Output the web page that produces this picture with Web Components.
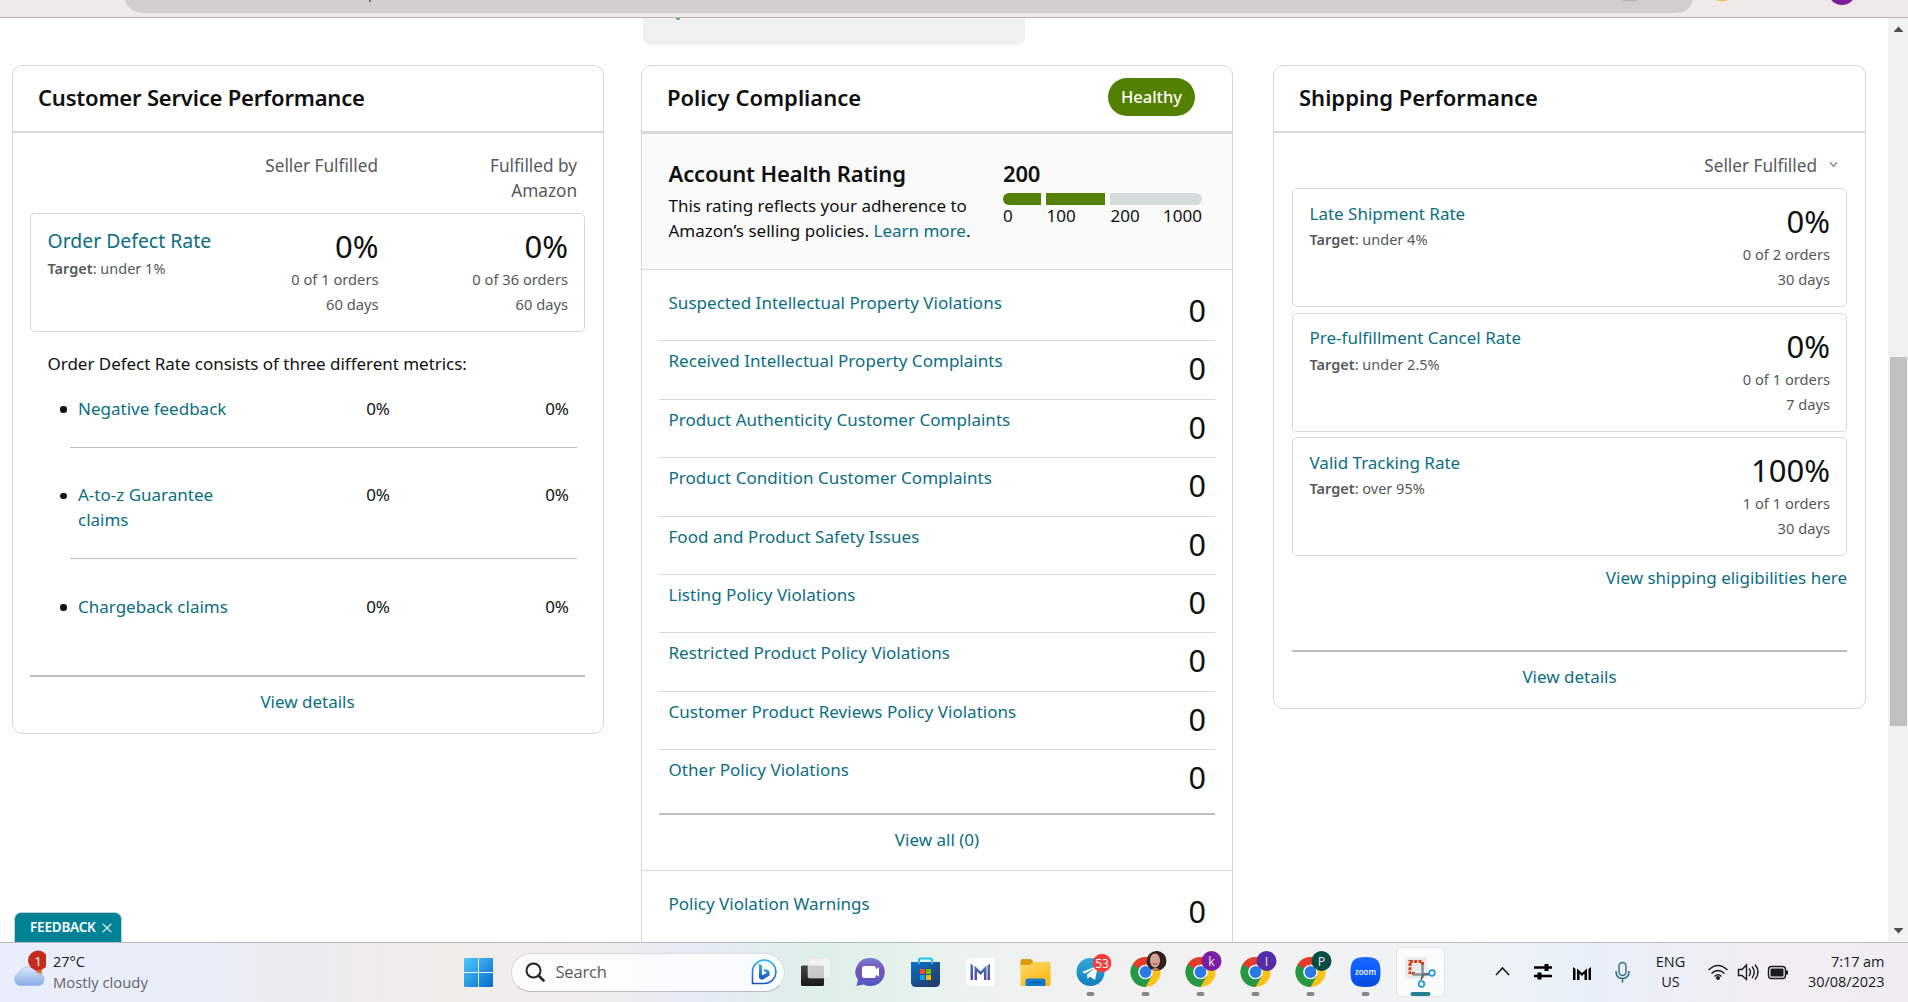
<!DOCTYPE html>
<html lang="en">
<head>
  <meta charset="utf-8">
  <title>Account Health</title>
  <style>
    html, body {
      margin: 0;
      height: 1002px;
      overflow: hidden;
      background: #fff;
    }

    body {
      font-family: "Noto Sans", "Open Sans", sans-serif;
      font-size: 17px;
      line-height: 25px;
      color: #0f1111;
      --link: #0b6e7f;
      --line: #d5d9d9;
      --line-dark: #b9bfbf;
      --muted: #565959;
    }
  </style>
</head>
<body>
  <health-app></health-app>

  <script>
    const define = (name, html, setup) => {
      const template = document.createElement('template')
      template.innerHTML = html.trim()

      customElements.define(name, class extends HTMLElement {
        constructor () {
          super()
          this.attachShadow({ mode: 'open' })
        }

        connectedCallback () {
          if (this.shadowRoot.firstChild) return
          this.shadowRoot.appendChild(template.content.cloneNode(true))
          if (setup) setup(this, this.shadowRoot)
        }
      })
    }

    // bottom edge of the browser toolbar
    define('browser-edge', /* html */`
      <style>
        :host { display: block; height: 17px; background: #efeae7; border-bottom: 1px solid #b9b5b1; overflow: hidden; }
        svg { display: block; }
      </style>
      <svg width="1908" height="17">
        <path d="M125 0 Q129 13 144 13 H1675 Q1690 13 1693 0 Z" fill="#d3cecb"/>
        <path d="M370 0v2" stroke="#4a7fb0" stroke-width="2"/>
        <path d="M1623 .5h14" stroke="#b5b1ae"/>
        <ellipse cx="1722" cy="-2" rx="7" ry="3.4" fill="#f0bd62"/>
        <circle cx="1842" cy="-9" r="14" fill="#7b1fa2"/>
      </svg>
    `)

    define('scroll-bar', /* html */`
      <style>
        :host { display: flex; flex-direction: column; align-items: center; width: 20px; height: 924px; background: #f1f1f1; }
        svg { display: block; flex: none; }
        .thumb { width: 17px; height: 369px; margin-top: 319px; margin-left: 1px; background: #c1c1c1; }
        .down { margin-top: auto; }
      </style>
      <svg width="20" height="20"><path d="M5.500 14h10l-5-5.500z" fill="#505050"/></svg>
      <div class="thumb"></div>
      <svg class="down" width="20" height="20"><path d="M5.500 6h10l-5 5.500z" fill="#505050"/></svg>
    `)

    define('health-card', /* html */`
      <style>
        :host { display: block; box-sizing: border-box; border: 1px solid var(--line); border-radius: 10px; background: #fff; }
        header { display: flex; align-items: center; justify-content: space-between; box-sizing: content-box; height: 62px; padding: 0 37px 3px 25px; border-bottom: var(--rule, 2px) solid var(--line); }
        h2 { margin: 1px 0 0; font-size: 22px; font-weight: 600; letter-spacing: var(--title-spacing, 0); }
      </style>
      <header><h2><slot name="title"></slot></h2><slot name="badge"></slot></header>
      <slot></slot>
    `)

    define('ui-link', /* html */`
      <style>
        :host { color: var(--link); }
      </style><slot></slot>
    `)

    define('metric-box', /* html */`
      <style>
        :host { display: flex; box-sizing: border-box; height: 119px; padding: 14px 16px 0 16.500px; border: 1px solid var(--line); border-radius: 5px; }
        .label { flex: 1; padding-top: var(--label-top, 0); margin-top: -2.500px; }
        .target { margin-top: var(--target-gap, 3.500px); font-size: 14.500px; line-height: 20px; color: var(--muted); }
        .target b { font-weight: 600; }
      </style>
      <div class="label">
        <slot name="name"></slot>
        <div class="target"><b>Target</b>: <slot name="target"></slot></div>
      </div>
      <slot></slot>
    `)

    define('metric-value', /* html */`
      <style>
        :host { display: block; width: 189.500px; text-align: right; font-size: 14.700px; color: var(--muted); }
        .value { height: 39px; font-size: 31px; line-height: 36px; color: #0f1111; }
      </style>
      <div class="value"></div>
      <div class="orders"></div>
      <div class="days"></div>
    `, (host, root) => {
      for (const key of ['value', 'orders', 'days']) {
        root.querySelector('.' + key).textContent = host.getAttribute(key)
      }
    })

    define('defect-row', /* html */`
      <style>
        :host { display: grid; grid-template-columns: 8px 160px 152px 179px; margin-left: 57px; margin-right: 26px; padding-bottom: 26px; border-bottom: 1px solid #b9bfbf; position: relative; }
        :host([last]) { border-bottom: 0; padding-bottom: 0; }
        .dot { position: absolute; left: -10px; top: 10.500px; width: 6.500px; height: 6.500px; border-radius: 50%; background: #0f1111; }
        .name { grid-column: 2; color: var(--link); }
        .num { text-align: right; }
      </style>
      <i class="dot"></i>
      <div class="name"><slot></slot></div>
      <div class="num">0%</div>
      <div class="num">0%</div>
    `)

    define('policy-row', /* html */`
      <style>
        :host { display: flex; justify-content: space-between; box-sizing: border-box; height: 58.400px; margin: 0 17px; padding: 7px 9px 0 9.500px; border-bottom: 1px solid var(--line); }
        :host([plain]) { border-bottom: 0; }
        .name { color: var(--link); }
        .count { font-size: 30.500px; line-height: 40px; }
      </style>
      <div class="name"><slot></slot></div>
      <div class="count">0</div>
    `)

    define('card-foot', /* html */`
      <style>
        :host { display: block; margin: 0 18px 0 17px; padding-top: 12px; border-top: 2px solid var(--line-dark); text-align: center; color: var(--link); }
      </style>
      <slot></slot>
    `)

    define('rating-panel', /* html */`
      <style>
        :host { display: flex; box-sizing: border-box; height: 136px; padding: 27px 30px 0 26.500px; background: #fafafa; border-bottom: 1px solid var(--line); }
        .text { width: 334.500px; white-space: nowrap; }
        h3 { margin: 0 0 6.500px; font-size: 22px; font-weight: 600; letter-spacing: -.15px; }
        .scale { width: 199px; }
        .scale h3 { margin-bottom: 7px; }
        .bar { display: grid; grid-template-columns: 38px 59px 1fr; gap: 5px; height: 12px; }
        .bar i { background: #538000; }
        .bar i:first-child { border-radius: 6px 0 0 6px; }
        .bar i:last-child { border-radius: 0 6px 6px 0; background: #d5dbdb; }
        .bar + div { display: grid; grid-template-columns: 43.500px 64px 1fr auto; line-height: 21px; }
      </style>
      <div class="text">
        <h3>Account Health Rating</h3>
        This rating reflects your adherence to<br>
        Amazon’s selling policies. <ui-link>Learn more</ui-link>.
      </div>
      <div class="scale">
        <h3>200</h3>
        <div class="bar"><i></i><i></i><i></i></div>
        <div><span>0</span><span>100</span><span>200</span><span>1000</span></div>
      </div>
    `)

    define('service-card', /* html */`
      <style>
        :host { display: block; --title-spacing: -.2px; }
        health-card { height: 669px; }
        .heads { display: grid; grid-template-columns: 348px 199px; box-sizing: border-box; height: 80px; padding: 19.500px 0 0 17px; color: var(--muted); text-align: right; font-size: 17.200px; }
        metric-box { margin: 0 18px 0 17px; --label-top: 2px; --target-gap: 4.500px; }
        metric-box ui-link { font-size: 19.400px; }
        .intro { margin: 18.500px 0 20px 34.500px; letter-spacing: -.03px; }
        .intro + defect-row ~ defect-row { margin-top: 34.500px; }
        card-foot { margin-top: 56px; }
      </style>
      <health-card>
        <span slot="title">Customer Service Performance</span>
        <div class="heads"><div>Seller Fulfilled</div><div>Fulfilled by<br>Amazon</div></div>
        <metric-box>
          <ui-link slot="name">Order Defect Rate</ui-link>
          <span slot="target">under 1%</span>
          <metric-value style="width:140px" value="0%" orders="0 of 1 orders" days="60 days"></metric-value>
          <metric-value value="0%" orders="0 of 36 orders" days="60 days"></metric-value>
        </metric-box>
        <div class="intro">Order Defect Rate consists of three different metrics:</div>
        <defect-row>Negative feedback</defect-row>
        <defect-row>A-to-z Guarantee<br>claims</defect-row>
        <defect-row last>Chargeback claims</defect-row>
        <card-foot>View details</card-foot>
      </health-card>
    `)

    define('policy-card', /* html */`
      <style>
        :host { display: block; }
        health-card { height: 900px; --rule: 3px; }
        .badge { padding: 6px 13px 7px; border-radius: 19px; background: #538000; color: #fff; font-weight: 500; font-size: 16.500px; }
        .rows { padding-top: 13px; letter-spacing: .03px; }
        card-foot { margin: 4.500px 17px 0; }
        .warnings { margin-top: 17.500px; padding-top: 13px; border-top: 1px solid var(--line); }
      </style>
      <health-card>
        <span slot="title">Policy Compliance</span>
        <span slot="badge" class="badge">Healthy</span>
        <rating-panel></rating-panel>
        <div class="rows">
          <policy-row>Suspected Intellectual Property Violations</policy-row>
          <policy-row>Received Intellectual Property Complaints</policy-row>
          <policy-row>Product Authenticity Customer Complaints</policy-row>
          <policy-row>Product Condition Customer Complaints</policy-row>
          <policy-row>Food and Product Safety Issues</policy-row>
          <policy-row>Listing Policy Violations</policy-row>
          <policy-row>Restricted Product Policy Violations</policy-row>
          <policy-row>Customer Product Reviews Policy Violations</policy-row>
          <policy-row plain>Other Policy Violations</policy-row>
        </div>
        <card-foot>View all (0)</card-foot>
        <div class="warnings"><policy-row plain>Policy Violation Warnings</policy-row></div>
      </health-card>
    `)

    define('shipping-card', /* html */`
      <style>
        :host { display: block; }
        health-card { height: 644px; }
        .filter { display: flex; align-items: center; justify-content: flex-end; gap: 12px; box-sizing: border-box; height: 55px; padding: 19.500px 27px 10.500px 0; color: var(--muted); font-size: 17.200px; }
        .boxes { display: grid; gap: 5.600px; margin: 0 18px; }
        .eligible { margin: 9px 18px 60px; text-align: right; }
        card-foot { margin: 0 18px; }
      </style>
      <health-card>
        <span slot="title">Shipping Performance</span>
        <div class="filter">Seller Fulfilled <svg width="9" height="7" style="margin-top:-2px"><path d="M1 1.200l3.500 4 3.500-4" fill="none" stroke="#8d9292" stroke-width="1.600"/></svg></div>
        <div class="boxes">
          <metric-box>
            <ui-link slot="name">Late Shipment Rate</ui-link><span slot="target">under 4%</span>
            <metric-value value="0%" orders="0 of 2 orders" days="30 days"></metric-value>
          </metric-box>
          <metric-box>
            <ui-link slot="name">Pre-fulfillment Cancel Rate</ui-link><span slot="target">under 2.5%</span>
            <metric-value value="0%" orders="0 of 1 orders" days="7 days"></metric-value>
          </metric-box>
          <metric-box>
            <ui-link slot="name">Valid Tracking Rate</ui-link><span slot="target">over 95%</span>
            <metric-value value="100%" orders="1 of 1 orders" days="30 days"></metric-value>
          </metric-box>
        </div>
        <div class="eligible"><ui-link>View shipping eligibilities here</ui-link></div>
        <card-foot>View details</card-foot>
      </health-card>
    `)

    define('feedback-tab', /* html */`
      <style>
        :host { display: flex; align-items: center; gap: 6px; box-sizing: border-box; width: 108px; height: 30px; padding-left: 15px; border: 1px solid #b8d5d8; border-bottom: 0; border-radius: 7px 7px 0 0; background: #008296; color: #fff; font-size: 13.500px; font-weight: 600; letter-spacing: -.2px; }
      </style>
      <span>FEEDBACK</span>
      <svg width="10" height="10"><path d="M.8.800l8.400 8.400M9.200.800L.8 9.200" stroke="#fff" stroke-width="1.200"/></svg>
    `)

    const chrome = (letter, color) => `
      <svg viewBox="0 0 55 59">
        <g transform="translate(27.500 29)">
          <circle r="15" fill="#fbc116"/>
          <path d="M0-7.500H13A15 15 0 0 0-13-7.500L-6.500 3.750Z" fill="#e33b2e"/>
          <path d="M-13-7.500A15 15 0 0 0 0 15L6.500 3.750 0 0Z" fill="#269746"/>
          <circle r="7.300" fill="#fff"/><circle r="5.900" fill="#2a79e8"/>
          <circle cx="11" cy="-11" r="10" fill="${color}"/>
          ${letter
            ? `<text x="11" y="-6.500" text-anchor="middle" font-size="12.500" font-weight="500" fill="#efe6f5">${letter}</text>`
            : '<path d="M2-7Q3-18 11-21Q21-20 20.500-9L15-2H6Z" fill="#2d2220"/><ellipse cx="9.500" cy="-11.500" rx="5" ry="7" fill="#d3a291"/><path d="M7-8.500q2.500 1.500 5 0" stroke="#a3434a" fill="none"/><path d="M6-2.500Q10-6 14-2.500L11-1Z" fill="#b67f70"/>'}
        </g>
        <rect x="23.500" y="49" width="8" height="4" rx="2" fill="#85888a"/>
      </svg>`

    define('task-apps', /* html */`
      <style>
        :host { display: flex; }
        svg { display: block; width: 55px; height: 59px; }
      </style>
      <svg viewBox="0 0 55 59">
        <defs><linearGradient id="tv" x2="0" y2="1"><stop stop-color="#454540"/><stop offset="1" stop-color="#181818"/></linearGradient></defs>
        <rect x="13" y="22.500" width="23" height="20.500" rx="1.500" fill="url(#tv)"/>
        <rect x="20" y="15" width="22.500" height="20" rx="1.500" fill="#f4f4f4" fill-opacity=".78" stroke="#dcdcdc" stroke-width=".6"/>
      </svg>
      <svg viewBox="0 0 55 59">
        <defs><linearGradient id="tm" x2="0" y2="1"><stop stop-color="#6f7fd4"/><stop offset=".4" stop-color="#7a55b8"/><stop offset="1" stop-color="#5059c9"/></linearGradient></defs>
        <path d="M27.500 15a14.200 14 0 0 1 0 28q-4 0-7-1.500L13.500 43l1.500-6A14.200 14 0 0 1 27.500 15z" fill="url(#tm)"/>
        <rect x="19" y="23" width="14" height="12" rx="2.500" fill="#fff"/><path d="M32 27l4-3v10l-4-3z" fill="#fff"/>
      </svg>
      <svg viewBox="0 0 55 59">
        <defs><linearGradient id="st" x2=".7" y2="1"><stop stop-color="#0873c4"/><stop offset="1" stop-color="#253b6b"/></linearGradient></defs>
        <path d="M13 19h29v20q0 5-5 5H18q-5 0-5-5z" fill="url(#st)"/>
        <path d="M21 21v-4q0-1.500 1.500-1.500h10Q34 15.500 34 17v4" fill="none" stroke="#1fc3f1" stroke-width="2"/>
        <path d="M22 26h5v5h-5z" fill="#f25022"/><path d="M28 26h5v5h-5z" fill="#7fba00"/><path d="M22 32h5v5h-5z" fill="#00a4ef"/><path d="M28 32h5v5h-5z" fill="#ffb900"/>
      </svg>
      <svg viewBox="0 0 55 59">
        <defs><linearGradient id="mm" x2="0" y2="1"><stop stop-color="#427bb3"/><stop offset="1" stop-color="#5145a1"/></linearGradient></defs>
        <rect x="13.500" y="15" width="28" height="28" rx="4" fill="#fff"/>
        <path d="M17.500 20.500l2.500 2v14.500h-2.500zM37 20.500l-2.500 2v14.500H37zM21.500 22.500l6 6 6-6v14.500h-2.500v-8.500l-3.500 3.500-3.500-3.500v8.500h-2.500z" fill="url(#mm)"/>
      </svg>
      <svg viewBox="0 0 55 59">
        <defs><linearGradient id="fo" x2=".6" y2="1"><stop stop-color="#ffda6b"/><stop offset="1" stop-color="#fcb913"/></linearGradient></defs>
        <path d="M12.500 24v-6q0-2 2-2h8l3.500 3h-1l-3 5z" fill="#dc9c11"/>
        <path d="M12.500 22h9l4-3H41q1.500 0 1.500 1.500v21Q42.500 43 41 43H14q-1.500 0-1.500-1.500z" fill="url(#fo)"/>
        <path d="M17.500 43v-5q0-2.500 2.500-2.500h15q2.500 0 2.500 2.500v5z" fill="#1279d0"/><path d="M21 39.500h13" stroke="#0b4f98"/>
      </svg>
      <svg viewBox="0 0 55 59">
        <defs><linearGradient id="tg" x2="0" y2="1"><stop stop-color="#30a9de"/><stop offset="1" stop-color="#137dbd"/></linearGradient></defs>
        <circle cx="27.500" cy="29" r="14" fill="url(#tg)"/>
        <path d="M19 29l16-6.500-3 14.500-5-3.500-2.500 2.500-.5-4.500 8-6.500-10 5.500z" fill="#fff"/>
        <circle cx="39" cy="20" r="9.300" fill="#f1403c"/>
        <text x="39" y="24.500" text-anchor="middle" font-size="12" fill="#fff">53</text>
        <rect x="23.500" y="49" width="8" height="4" rx="2" fill="#85888a"/>
      </svg>
      ${chrome('', '#3a2a28')}
      ${chrome('k', '#7b1fa2')}
      ${chrome('I', '#512da8')}
      ${chrome('P', '#064c42')}
      <svg viewBox="0 0 55 59">
        <defs><linearGradient id="zo" x2="0" y2="1"><stop stop-color="#1a6bff"/><stop offset=".5" stop-color="#0b5cff"/><stop offset="1" stop-color="#0947d8"/></linearGradient></defs>
        <path d="M27.500 14C39 14 42.500 17.500 42.500 29S39 44 27.500 44 12.500 40.500 12.500 29 16 14 27.500 14z" fill="url(#zo)"/>
        <text x="27.500" y="31.500" text-anchor="middle" font-size="9" font-weight="600" textLength="21" lengthAdjust="spacingAndGlyphs" fill="#fff">zoom</text>
        <rect x="23.500" y="49" width="8" height="4" rx="2" fill="#85888a"/>
      </svg>
      <svg viewBox="0 0 55 59">
        <rect x="3.500" y="4.500" width="48" height="49" rx="5" fill="#fafbfb" stroke="#e2e4e5"/>
        <rect x="12.500" y="14" width="22" height="22" rx="3" fill="#e9eaec"/>
        <path d="M28.500 18.500H17V31" fill="none" stroke="#d13c12" stroke-width="3" stroke-dasharray="3 1.300"/>
        <path d="M29.500 19v3M19 30.500h3" stroke="#d13c12" stroke-width="3" fill="none"/>
        <path d="M29.500 21.500v13.500M20 31.500h18" stroke="#8a9096" stroke-width="2.600"/>
        <path d="M28 37l2-5.500 6.500-1" stroke="#555e66" stroke-width="1.500" fill="none"/>
        <circle cx="39" cy="30" r="2.800" fill="#fff" stroke="#1c9bd7" stroke-width="1.700"/><circle cx="28.500" cy="41" r="2.800" fill="#fff" stroke="#1c9bd7" stroke-width="1.700"/>
        <rect x="17.500" y="49" width="20" height="4" rx="2" fill="#22818f"/>
      </svg>
    `)

    define('search-box', /* html */`
      <style>
        :host { display: flex; align-items: center; box-sizing: border-box; width: 274px; height: 39px; padding: 0 7px 0 13px; border: 1px solid #d8d8da; border-bottom-color: #b9bbbd; border-radius: 20px; background: rgba(255, 255, 255, .8); color: #5a5a5a; font-size: 16.500px; }
        span { flex: 1; margin-left: 11px; letter-spacing: -.2px; }
      </style>
      <svg width="20" height="20"><circle cx="8.500" cy="8.500" r="7" fill="none" stroke="#262626" stroke-width="2"/><path d="M13.500 13.500l5 5" stroke="#262626" stroke-width="2.600" stroke-linecap="round"/></svg>
      <span>Search</span>
      <svg width="26" height="26">
        <defs><linearGradient id="bi" x2="0" y2="1"><stop stop-color="#2fb7ee"/><stop offset="1" stop-color="#1b4fc4"/></linearGradient></defs>
        <path d="M1.500 24.500V12.500A11.700 11.700 0 1 1 13 24.500z" fill="#fff" stroke="url(#bi)" stroke-width="1.600"/>
        <path d="M8 5l3 1.300v10l5-2.600-2.300-1-1.200-3.200 6 2.500v4.500L11 21l-3-2z" fill="url(#bi)"/>
      </svg>
    `)

    define('task-bar', /* html */`
      <style>
        :host { display: flex; box-sizing: border-box; height: 60px; border-top: 1px solid #b9bbbf; background: linear-gradient(90deg, #e9eefa 0, #e9eef9 200px, #ececf0 300px, #f1ece8 440px, #efeeee 600px, #e5eaf6 700px, #ddf0e7 830px, #e9f2ee 930px, #f1f1f1 1080px, #f1f2f3 1380px, #edf3f5 1460px, #e9eff9 1600px, #f0edf3 1750px, #f0edf2 1908px); font-family: "Open Sans", "Noto Sans", sans-serif; font-size: 14.500px; line-height: 20px; color: #1c1c1c; }
        svg { display: block; flex: none; }
        .weather { display: flex; width: 451px; padding-top: 8.500px; box-sizing: border-box; }
        .weather svg { margin: -2px 7px 0 12px; }
        .muted { color: #636569; font-size: 14.800px; }
        search-box { margin: 9.500px 3px 0 4.500px; }
        .tray { display: flex; flex: 1; }
        .lang { width: 50px; text-align: center; padding-top: 8.500px; }
        .clock { margin-left: auto; margin-right: 23.500px; padding-top: 8.500px; text-align: right; letter-spacing: -.05px; }
      </style>
      <div class="weather">
        <svg width="34" height="42">
          <defs><linearGradient id="cl" x2="0" y2="1"><stop stop-color="#dbe8fc"/><stop offset="1" stop-color="#86abe6"/></linearGradient></defs>
          <circle cx="24" cy="22" r="6" fill="#ee7424"/>
          <path d="M8 35.500a6.500 6.500 0 0 1-1-12.500Q10 16.500 16 17q7 0 9 6 7 0 7 6.500 0 6-7 6z" fill="url(#cl)" stroke="#9db8e4" stroke-width=".7"/>
          <circle cx="26" cy="10.500" r="10" fill="#c42b1c"/>
          <text x="26" y="15.500" text-anchor="middle" font-size="13.500" fill="#fff">1</text>
        </svg>
        <div>27°C<div class="muted">Mostly cloudy</div></div>
      </div>
      <svg width="55" height="59">
        <defs><linearGradient id="wn" x2="1" y2="1"><stop stop-color="#4cc9fb"/><stop offset="1" stop-color="#0669cd"/></linearGradient></defs>
        <path d="M13 16q0-1 1-1h13v14H13zM28 15h13q1 0 1 1v13H28zM13 30h14v14H14q-1 0-1-1zM28 30h14v13q0 1-1 1H28z" fill="url(#wn)"/>
      </svg>
      <search-box></search-box>
      <task-apps></task-apps>
      <div class="tray">
        <svg width="198" height="59" fill="none" stroke="#1c1c1c">
          <path d="M48 32l6.500-7 6.500 7" stroke-width="1.600"/>
          <path d="M86 24.500h18M86 33h18" stroke="#000" stroke-width="2.400"/><path d="M98.500 21v7M91.500 29.500v7" stroke="#000" stroke-width="4"/>
          <path d="M125 24l2.500 2v11H125zM143 24l-2.500 2v11h2.500zM129 25.500l5 4.500 5-4.500V37h-2.500v-6.500l-2.500 2.500-2.500-2.500V37H129z" fill="#000" stroke="none"/>
          <rect x="171" y="19.500" width="7" height="13" rx="3.500" stroke="#2f6d80" stroke-width="1.400"/><path d="M168 28q0 7.500 6.500 7.500t6.500-7.500M174.500 35.500v4" stroke="#2f6d80" stroke-width="1.500"/>
        </svg>
        <div class="lang">ENG<br>US</div>
        <svg width="110" height="59" fill="none" stroke="#1c1c1c" stroke-width="1.400">
          <path d="M12.500 27q9.500-9 19 0M15.500 30.500q6.500-6 13 0M18.500 33.500q3.500-3.300 7 0"/><circle cx="22" cy="35" r="1.300" fill="#1c1c1c"/>
          <path d="M42.500 26.500h3.500l4.500-4.500v14.500L46 32.500h-3.500zM53 25.500q3 3.800 0 7.500M56 23.500q4.500 5.600 0 11.500M59 21.500q6 7.500 0 15"/>
          <rect x="72.500" y="23.500" width="17" height="12" rx="3"/><rect x="74.500" y="25.500" width="13" height="8" rx="1" fill="#1c1c1c" stroke="none"/><path d="M91 27.500v4" stroke-width="2"/>
        </svg>
        <div class="clock">7:17 am<br>30/08/2023</div>
      </div>
    `)

    define('health-app', /* html */`
      <style>
        :host { display: flex; flex-direction: column; width: 1908px; height: 1002px; position: relative; }
        main { display: flex; height: 924px; overflow: hidden; }
        .page { width: 1888px; flex: none; }
        .notice { display: block; width: 382px; height: 27px; margin: 0 0 20px 643px; border-radius: 0 0 8px 8px; background: #eff1f1; }
        .notice i { display: block; width: 4px; height: 1.500px; margin-left: 33px; background: #3fa648; border-radius: 0 0 2px 2px; }
        .cards { display: flex; align-items: flex-start; }
        service-card { width: 592px; margin-left: 12px; }
        policy-card { width: 592px; margin-left: 37px; }
        shipping-card { width: 593px; margin-left: 40px; }
        feedback-tab { position: absolute; left: 14px; top: 912px; }
      </style>
      <browser-edge></browser-edge>
      <main>
        <div class="page">
          <div class="notice"><i></i></div>
          <div class="cards">
            <service-card></service-card>
            <policy-card></policy-card>
            <shipping-card></shipping-card>
          </div>
        </div>
        <scroll-bar></scroll-bar>
      </main>
      <task-bar></task-bar>
      <feedback-tab></feedback-tab>
    `)
  </script>
</body>
</html>
